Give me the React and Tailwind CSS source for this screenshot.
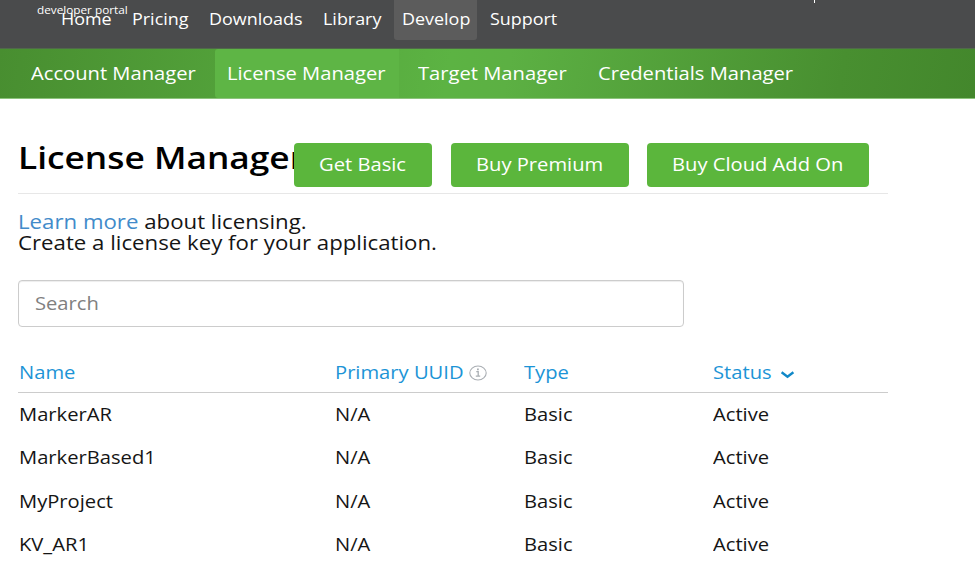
function T({ children, className = "" }) {
  return (
    <span className={`inline-block origin-left scale-x-[1.12] whitespace-nowrap ${className}`}>{children}</span>
  );
}

const navItems = [
  { label: "Home", box: "w-[71px]" },
  { label: "Pricing", box: "w-[77px]" },
  { label: "Downloads", box: "w-[114px]" },
  { label: "Library", box: "w-[71px]" },
  { label: "Develop", box: "w-[83px] pl-[8px] mr-[13.5px] rounded-b-[3px] bg-[#5c5c5c]" },
  { label: "Support", box: "w-[80px]" },
];

const tabs = [
  { label: "Account Manager", box: "w-[184.5px]" },
  { label: "License Manager", box: "w-[184px] pl-[12px] rounded-l-[3px] bg-[#5eb545]" },
  { label: "Target Manager", box: "w-[199px] pl-[18.5px]" },
  { label: "Credentials Manager", box: "w-[210px]" },
];

const buttons = [
  { label: "Get Basic", box: "w-[138px]" },
  { label: "Buy Premium", box: "w-[178px]" },
  { label: "Buy Cloud Add On", box: "w-[222px]" },
];

const rows = ["MarkerAR", "MarkerBased1", "MyProject", "KV_AR1"];

const grid = "grid grid-cols-[315.5px_189px_189px_1fr] items-center pl-px";

function InfoIcon() {
  return (
    <svg className="ml-[19.5px] mt-[2px] h-[16px] w-[18px] shrink-0" viewBox="0 0 18 16" fill="none" stroke="#a9aeb3">
      <ellipse cx="9" cy="8" rx="8.2" ry="7" strokeWidth="1.1" />
      <path d="M7.3 6.6H9.2V11M6.8 11.2H11.2" strokeWidth="1.3" />
      <path d="M8 4.4H9.8" strokeWidth="1.6" />
    </svg>
  );
}

export default function App() {
  return (
    <div className="h-[577px] w-[975px] overflow-hidden bg-white font-['Open_Sans','Noto_Sans',sans-serif] text-[18px] text-[#151515]">
      <header className="relative h-[49px] border-b border-[#50694a] bg-[#4a4b4c] text-white">
        <nav className="flex pl-[60.5px] text-[16px] leading-[38px]">
          {navItems.map((n) => (
            <a key={n.label} className={`h-[40px] shrink-0 ${n.box}`}>
              <T>{n.label}</T>
            </a>
          ))}
        </nav>
        <div className="absolute left-[36.5px] top-[2px] text-[10.5px] font-medium leading-[16px]">
          <T>developer portal</T>
        </div>
        <div className="absolute left-[814px] top-0 h-[3px] w-px bg-white" />
      </header>

      <nav className="flex h-[50px] border-b border-[#8cc47c] bg-[linear-gradient(100deg,#488e30_0%,#5cb343_46%,#5cb043_52%,#488f30_86%,#43872c_100%)] pl-[30.5px] leading-[49px] text-white">
        {tabs.map((t) => (
          <a key={t.label} className={`shrink-0 ${t.box}`}>
            <T>{t.label}</T>
          </a>
        ))}
      </nav>

      <main className="ml-[18px] w-[870px]">
        <div className="flex h-[95px] border-b border-[#e7e7e7] pt-[44px]">
          <h1 className="w-[276px] shrink-0 text-[31.5px] font-semibold leading-[28px] text-black">
            <T>License Manager</T>
          </h1>
          <div className="z-10 flex gap-[18.6px]">
            {buttons.map((b) => (
              <button key={b.label} className={`h-[44px] rounded-[4px] bg-[#5bb63c] pb-px pl-[25px] text-left text-white ${b.box}`}>
                <T>{b.label}</T>
              </button>
            ))}
          </div>
        </div>

        <div className="pt-[17px] text-[19.85px] leading-[21px]">
          <p>
            <T><a className="text-[#428bca]">Learn more</a> about licensing.</T>
          </p>
          <p>
            <T>Create a license key for your application.</T>
          </p>
        </div>

        <div className="mt-[27px] flex h-[47px] w-[666px] items-center rounded-[4px] border border-[#cccccc] pb-px pl-[15.5px] text-[#808080] shadow-[inset_0_1px_1px_rgba(0,0,0,0.075)]">
          <T>Search</T>
        </div>

        <div className={`${grid} mt-[24px] h-[42px] border-b border-[#cccccc] pt-px text-[#1c94d6]`}>
          <T>Name</T>
          <div className="flex items-center">
            <T>Primary UUID</T>
            <InfoIcon />
          </div>
          <T>Type</T>
          <div className="flex items-center">
            <T>Status</T>
            <svg className="ml-[15px] mt-[5px] h-[8px] w-[15px]" viewBox="0 0 15 8" fill="none" stroke="#1088c8" strokeWidth="2.4">
              <path d="M1.6 1.3L7.5 5.7L13.4 1.3" />
            </svg>
          </div>
        </div>

        {rows.map((name) => (
          <div key={name} className={`${grid} h-[43.5px] pb-[2.5px] leading-[40px]`}>
            <T>{name}</T>
            <T>N/A</T>
            <T>Basic</T>
            <T>Active</T>
          </div>
        ))}
      </main>
    </div>
  );
}
